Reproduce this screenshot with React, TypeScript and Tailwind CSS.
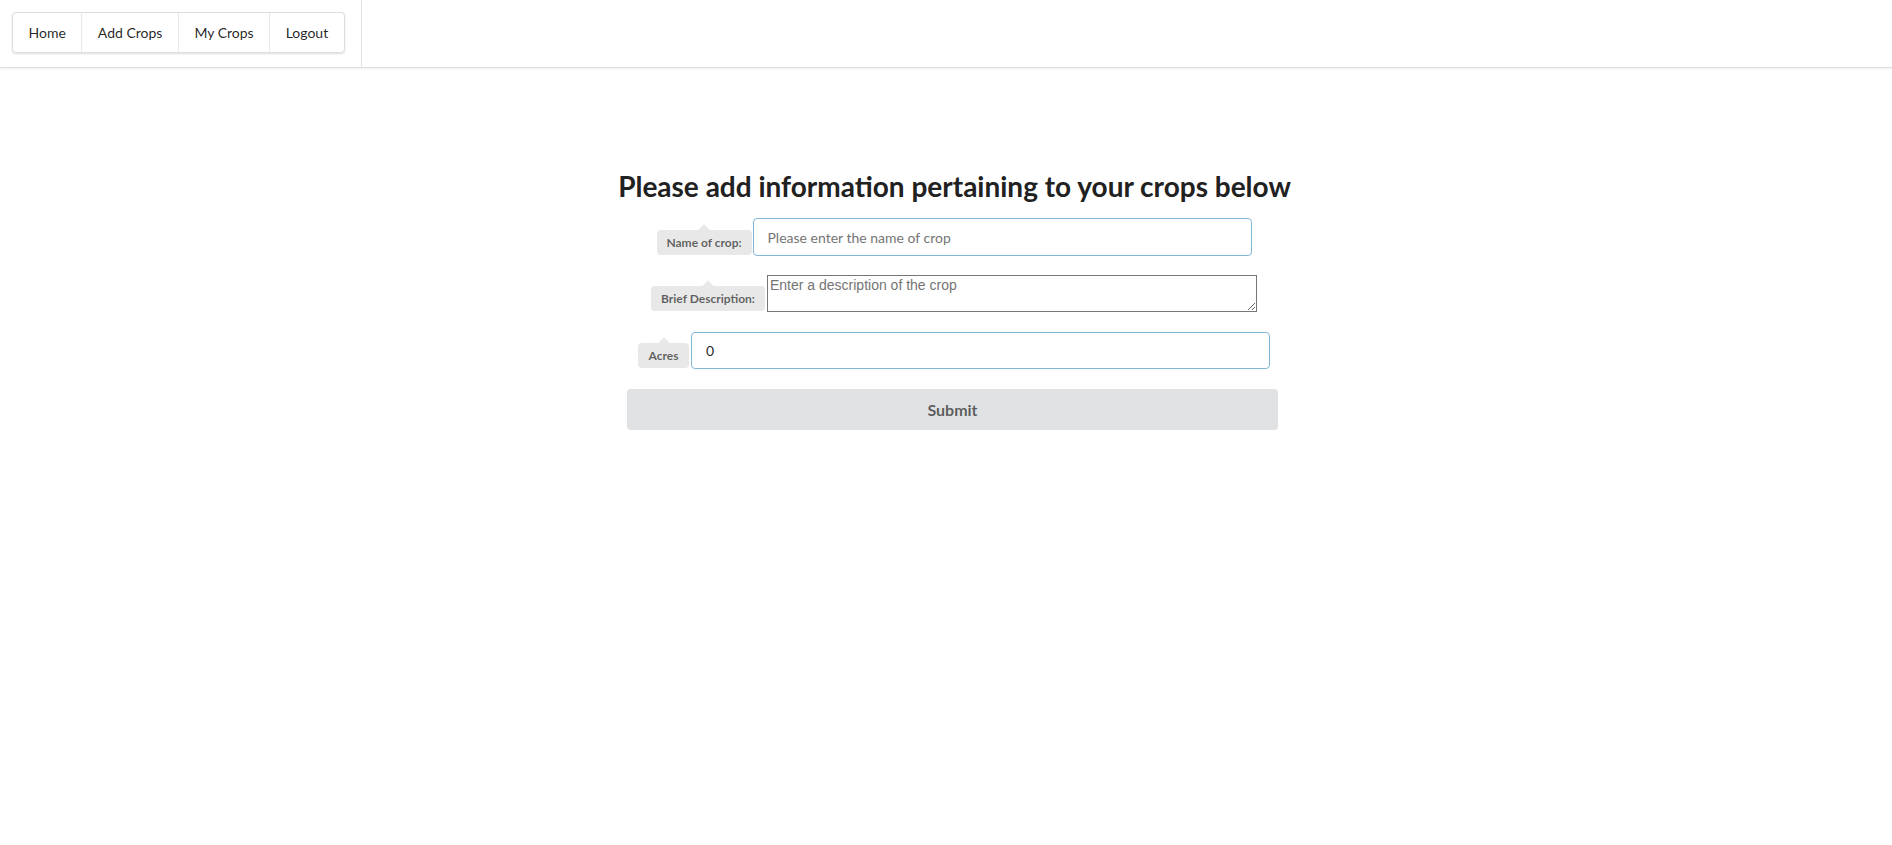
import React, { useState } from 'react';

const navItems = ['Home', 'Add Crops', 'My Crops', 'Logout'];

function PointingLabel({ children, width }: { children: React.ReactNode; width: string }) {
  return (
    <div
      className={`relative mb-[1px] flex h-[25px] shrink-0 items-center justify-center rounded-[4px] bg-[#e8e8e8] text-[12px] font-bold leading-none text-black/60 ${width}`}
    >
      {/* arrow on top */}
      <span className="absolute left-1/2 top-0 h-[8px] w-[8px] -translate-x-1/2 -translate-y-1/2 rotate-45 bg-[#e8e8e8]" />
      <span className="relative">{children}</span>
    </div>
  );
}

export default function App() {
  const [formData, setFormData] = useState({ name: '', description: '', acres: '0' });

  return (
    <div className="min-h-screen bg-white font-['Lato','Liberation_Sans',sans-serif] text-[14px] text-[rgba(0,0,0,0.87)]">
      {/* Header */}
      <header className="flex h-[68px] border-b border-[#dedede] shadow-[0_1px_2px_rgba(34,36,38,0.08)]">
        <div className="flex w-[362px] items-start border-r border-[#e3e3e3] pl-[12px] pt-[12px]">
          <nav className="flex h-[41px] overflow-hidden rounded-[4px] border border-[rgba(34,36,38,0.15)] shadow-[0_1px_2px_rgba(34,36,38,0.15)]">
            {navItems.map((item, i) => (
              <a
                key={item}
                href="#"
                className={`flex items-center px-[15.5px] text-[14px] text-[rgba(0,0,0,0.87)] ${
                  i > 0 ? 'border-l border-[rgba(34,36,38,0.1)]' : ''
                }`}
              >
                {item}
              </a>
            ))}
          </nav>
        </div>
      </header>

      {/* Form */}
      <main className="flex justify-center pl-[13px] pt-[100px]">
        <div className="flex w-[651px] flex-col items-center">
          <h1 className="whitespace-nowrap pl-[4px] text-[28px] font-bold leading-[36px] text-[#212121]">
            Please add information pertaining to your crops below
          </h1>

          <form className="mt-[14px] flex w-full flex-col items-center" onSubmit={(e) => e.preventDefault()}>
            {/* Name */}
            <div className="flex items-end pl-[3px]">
              <PointingLabel width="w-[95px]">Name of crop:</PointingLabel>
              <input
                value={formData.name}
                onChange={(e) => setFormData({ ...formData, name: e.target.value })}
                placeholder="Please enter the name of crop"
                className="ml-[1px] h-[38px] w-[499px] rounded-[4px] border border-[#85b7d9] px-[14px] text-[14px] text-[rgba(0,0,0,0.8)] outline-none placeholder:text-[#757575]"
              />
            </div>

            {/* Description */}
            <div className="mt-[19px] flex items-end pl-[3px]">
              <PointingLabel width="w-[114px]">Brief Description:</PointingLabel>
              <textarea
                value={formData.description}
                onChange={(e) => setFormData({ ...formData, description: e.target.value })}
                placeholder="Enter a description of the crop"
                className="ml-[2px] block h-[37px] w-[490px] border border-[#767676] px-[2px] py-[1px] font-['Liberation_Sans',Arial,sans-serif] text-[14px] leading-[17px] text-black outline-none placeholder:text-[#757575]"
              />
            </div>

            {/* Acres */}
            <div className="mt-[20px] flex items-end pl-[3px]">
              <PointingLabel width="w-[51px]">Acres</PointingLabel>
              <input
                type="number"
                value={formData.acres}
                onChange={(e) => setFormData({ ...formData, acres: e.target.value })}
                className="ml-[2px] h-[37px] w-[579px] rounded-[4px] border border-[#85b7d9] px-[14px] text-[14px] text-[rgba(0,0,0,0.87)] outline-none [appearance:textfield]"
              />
            </div>

            <button
              type="submit"
              className="mt-[20px] h-[41px] w-[651px] rounded-[4px] bg-[#e0e1e2] text-[16px] font-bold text-black/60"
            >
              Submit
            </button>
          </form>
        </div>
      </main>
    </div>
  );
}
